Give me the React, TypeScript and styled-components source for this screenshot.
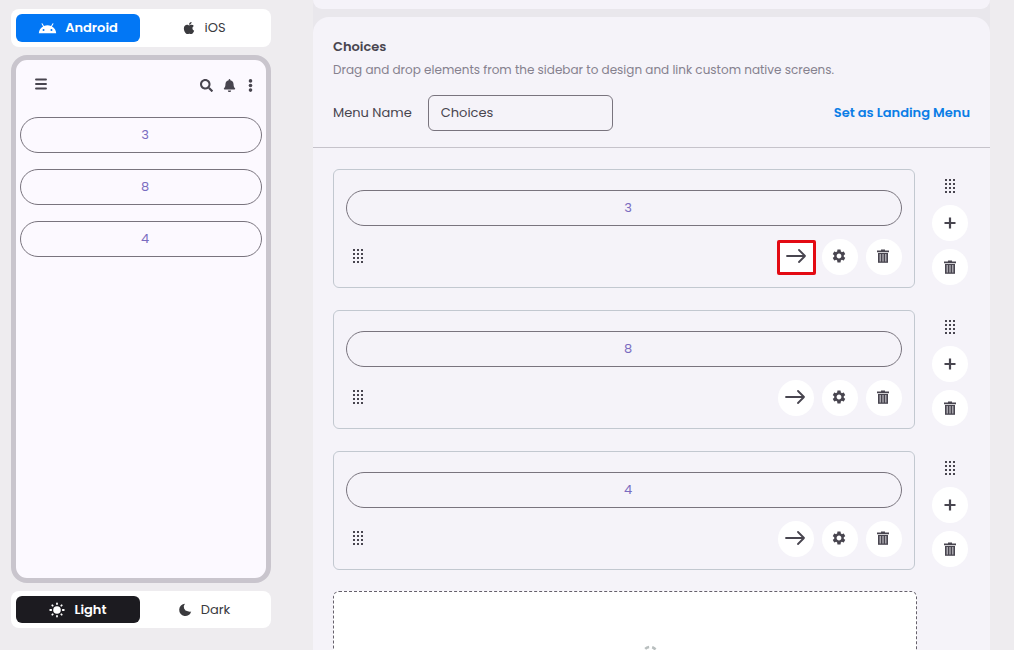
import React from "react";
import styled, { createGlobalStyle, css } from "styled-components";
import { MdAndroid, MdSettings } from "react-icons/md";
import { FaApple, FaSearch, FaBell } from "react-icons/fa";

const GlobalStyle = createGlobalStyle`
  * { box-sizing: border-box; }
  body {
    margin: 0;
    background: #eeecef;
    color: #48454f;
    font-family: Poppins, Inter, "Open Sans", sans-serif;
    font-size: 13px;
    line-height: 20px;
  }
  button, input { font: inherit; color: inherit; }
  button { border: 0; padding: 0; background: none; cursor: pointer; }
  svg { display: block; flex: none; }
`;

const Page = styled.div`
  display: flex;
  gap: 42px;
  height: 100vh;
  overflow: hidden;
  padding-left: 11px;
  padding-right: 24px;
`;

const Sidebar = styled.aside`
  flex: none;
  width: 260px;
  display: flex;
  flex-direction: column;
  gap: 8px;
  padding: 9px 0 22px;
`;

const Segmented = styled.div`
  display: flex;
  flex: none;
  gap: 2px;
  height: 38px;
  padding: 5px;
  background: #fff;
  border-radius: 8px;
`;

const Segment = styled.button<{ $fill?: string }>`
  flex: 1;
  display: flex;
  align-items: center;
  justify-content: center;
  gap: 8px;
  border-radius: 6px;
  color: #3a3a3e;
  ${(p) =>
    p.$fill &&
    css`
      background: ${p.$fill};
      color: #fff;
      font-weight: 600;
    `}
`;

const ThemeSwitch = styled(Segmented)`
  height: 37px;

  ${Segment} {
    gap: 9px;
  }
`;

const Phone = styled.section`
  flex: 1;
  border: 5px solid #c9c5cd;
  border-radius: 16px;
  background: #fcf9ff;
  padding: 12px 4px;
`;

const PhoneBar = styled.header`
  display: flex;
  align-items: center;
  gap: 10px;
  height: 26px;
  margin-bottom: 19px;
  padding: 0 7px 0 15px;
`;

const MenuButton = styled.button`
  margin-right: auto;
`;

const PhoneList = styled.div`
  display: flex;
  flex-direction: column;
  gap: 16px;
`;

const Pill = styled.button`
  display: block;
  width: 100%;
  height: 36px;
  padding-left: 8px;
  border: 1px solid #79747e;
  border-radius: 18px;
  color: #7a6cc0;
`;

const Content = styled.main`
  flex: 1;
  min-width: 0;
  display: flex;
  flex-direction: column;
  gap: 8px;
  background: #e9e7ec;
`;

const PreviousCard = styled.section`
  flex: none;
  height: 9px;
  border-radius: 0 0 16px 16px;
  background: #f5f3f9;
`;

const Card = styled.section`
  flex: none;
  border-radius: 16px 16px 0 0;
  background: #f5f3f9;
`;

const CardHeader = styled.header`
  padding: 20px 20px 16px;
  border-bottom: 1px solid #c6c3cb;
`;

const Title = styled.h2`
  margin: 0 0 3px;
  font-size: 13px;
  line-height: 20px;
  font-weight: 600;
`;

const Hint = styled.p`
  margin: 0 0 15px;
  color: #85818e;
  font-size: 12px;
`;

const NameRow = styled.div`
  display: flex;
  align-items: center;
  gap: 16px;
`;

const NameInput = styled.input`
  width: 185px;
  height: 36px;
  padding: 0 12px;
  border: 1px solid #79747e;
  border-radius: 6px;
  background: transparent;
`;

const LandingButton = styled.button`
  margin-left: auto;
  color: #0b7de6;
  font-weight: 600;
`;

const Rows = styled.div`
  display: flex;
  flex-direction: column;
  gap: 22px;
  padding: 21px 20px 20px;
`;

const Row = styled.div`
  display: flex;
  gap: 15px;
`;

const RowBox = styled.div`
  flex: 1;
  padding: 20px 12px 12px;
  border: 1px solid #c2c8d0;
  border-radius: 6px;
`;

const RoundButton = styled.button<{ $marked?: boolean }>`
  display: grid;
  place-items: center;
  width: 36px;
  height: 36px;
  border-radius: 18px;
  background: #fff;
  ${(p) =>
    p.$marked &&
    css`
      width: 39px;
      height: 35px;
      margin-right: -2px;
      border: 3px solid #e30a13;
      border-radius: 2px;
    `}
`;

const Actions = styled.div`
  display: flex;
  align-items: center;
  gap: 8px;
  margin-top: 13px;

  ${RoundButton} {
    padding: 0 2px 2px 0;
  }
`;

const Handle = styled.button`
  margin: 0 auto 0 6px;
  padding-bottom: 2px;
`;

const RowTools = styled.div`
  width: 40px;
  display: flex;
  flex-direction: column;
  align-items: center;
  gap: 8px;
  padding-top: 9px;
`;

const RowHandle = styled.button`
  margin-bottom: 3px;
`;

const DropZone = styled.div`
  display: flex;
  justify-content: center;
  height: 130px;
  margin: -1px 53px 0 0;
  padding: 53px 0 0 50px;
  border: 1px dashed #66616c;
  border-radius: 6px;
  background: #fff;
`;

const GripIcon = () => (
  <svg width="12" height="16" viewBox="0 0 12 16" fill="currentColor">
    {[1, 5, 9].map((x) =>
      [1, 5, 9, 13].map((y) => <rect key={`${x}-${y}`} x={x} y={y} width="2" height="2" />)
    )}
  </svg>
);

const TrashIcon = () => (
  <svg width="12" height="14" viewBox="0 0 12 14">
    <path d="M4 .5h4v1h4v1.8H0V1.5h4z" fill="currentColor" />
    <path d="M1 4h10v9.8H1z" fill="currentColor" />
    <path d="M3.2 5v7.4M6 5v7.4M8.8 5v7.4" stroke="#c9c7cd" strokeWidth="1.1" />
  </svg>
);

const PlusIcon = () => (
  <svg width="12" height="12" viewBox="0 0 12 12" stroke="currentColor" strokeWidth="2.2">
    <path d="M6 .5v11M.5 6h11" />
  </svg>
);

const ArrowIcon = () => (
  <svg width="20" height="14" viewBox="0 0 20 14" fill="none" stroke="currentColor" strokeWidth="1.8" strokeLinecap="round" strokeLinejoin="round">
    <path d="M1 7h18M13 1l6 6-6 6" />
  </svg>
);

const BarsIcon = () => (
  <svg width="12" height="14" viewBox="0 0 12 14" stroke="currentColor" strokeWidth="1.9" strokeLinecap="round">
    <path d="M1 1.5h10M1 6h10M1 10.5h10" />
  </svg>
);

const MoreIcon = () => (
  <svg width="9" height="13" viewBox="0 0 9 13" fill="currentColor">
    <circle cx="4.5" cy="1.9" r="1.8" />
    <circle cx="4.5" cy="6.5" r="1.8" />
    <circle cx="4.5" cy="11.1" r="1.8" />
  </svg>
);

const SunIcon = () => (
  <svg width="16" height="16" viewBox="0 0 16 16" stroke="currentColor" strokeWidth="1.8" strokeLinecap="round">
    <circle cx="8" cy="8" r="3.8" fill="currentColor" stroke="none" />
    <path d="M8 1.4v.6M8 14v.6M1.2 8h1M13.8 8h1M3.3 3.3l.4.4M12.3 12.3l.4.4M3.3 12.7l.4-.4M12.3 3.7l.4-.4" />
  </svg>
);

const MoonIcon = () => (
  <svg width="14" height="14" viewBox="0 0 14 14" fill="currentColor">
    <path d="M7 .8A6.1 6.1 0 1 0 13.2 8.4Q11.4 9 9.8 8.2A4.4 4.4 0 0 1 7 .8z" />
  </svg>
);

const LoaderIcon = () => (
  <svg width="18" height="18" viewBox="0 0 18 18" fill="none" stroke="#b9bfbf" strokeWidth="2.6">
    <circle cx="9" cy="9" r="7" strokeDasharray="4.33 3" strokeDashoffset="1.8" transform="rotate(-60 9 9)" />
  </svg>
);

const choices = ["3", "8", "4"];

export default function App() {
  return (
    <>
      <GlobalStyle />
      <Page>
        <Sidebar>
          <Segmented>
            <Segment $fill="#0277f5"><MdAndroid size={19} />Android</Segment>
            <Segment><FaApple size={14} />iOS</Segment>
          </Segmented>
          <Phone>
            <PhoneBar>
              <MenuButton aria-label="Menu"><BarsIcon /></MenuButton>
              <button aria-label="Search"><FaSearch size={13} /></button>
              <button aria-label="Notifications"><FaBell size={13} /></button>
              <button aria-label="More"><MoreIcon /></button>
            </PhoneBar>
            <PhoneList>
              {choices.map((c) => <Pill key={c}>{c}</Pill>)}
            </PhoneList>
          </Phone>
          <ThemeSwitch>
            <Segment $fill="#1c1b20"><SunIcon />Light</Segment>
            <Segment><MoonIcon />Dark</Segment>
          </ThemeSwitch>
        </Sidebar>
        <Content>
          <PreviousCard />
          <Card>
            <CardHeader>
              <Title>Choices</Title>
              <Hint>Drag and drop elements from the sidebar to design and link custom native screens.</Hint>
              <NameRow>
                <label htmlFor="menu-name">Menu Name</label>
                <NameInput id="menu-name" defaultValue="Choices" />
                <LandingButton>Set as Landing Menu</LandingButton>
              </NameRow>
            </CardHeader>
            <Rows>
              {choices.map((c, i) => (
                <Row key={c}>
                  <RowBox>
                    <Pill>{c}</Pill>
                    <Actions>
                      <Handle aria-label="Move element"><GripIcon /></Handle>
                      <RoundButton $marked={i === 0} aria-label="Open link"><ArrowIcon /></RoundButton>
                      <RoundButton aria-label="Settings"><MdSettings size={16} /></RoundButton>
                      <RoundButton aria-label="Delete element"><TrashIcon /></RoundButton>
                    </Actions>
                  </RowBox>
                  <RowTools>
                    <RowHandle aria-label="Move row"><GripIcon /></RowHandle>
                    <RoundButton aria-label="Add element"><PlusIcon /></RoundButton>
                    <RoundButton aria-label="Delete row"><TrashIcon /></RoundButton>
                  </RowTools>
                </Row>
              ))}
              <DropZone><LoaderIcon /></DropZone>
            </Rows>
          </Card>
        </Content>
      </Page>
    </>
  );
}
